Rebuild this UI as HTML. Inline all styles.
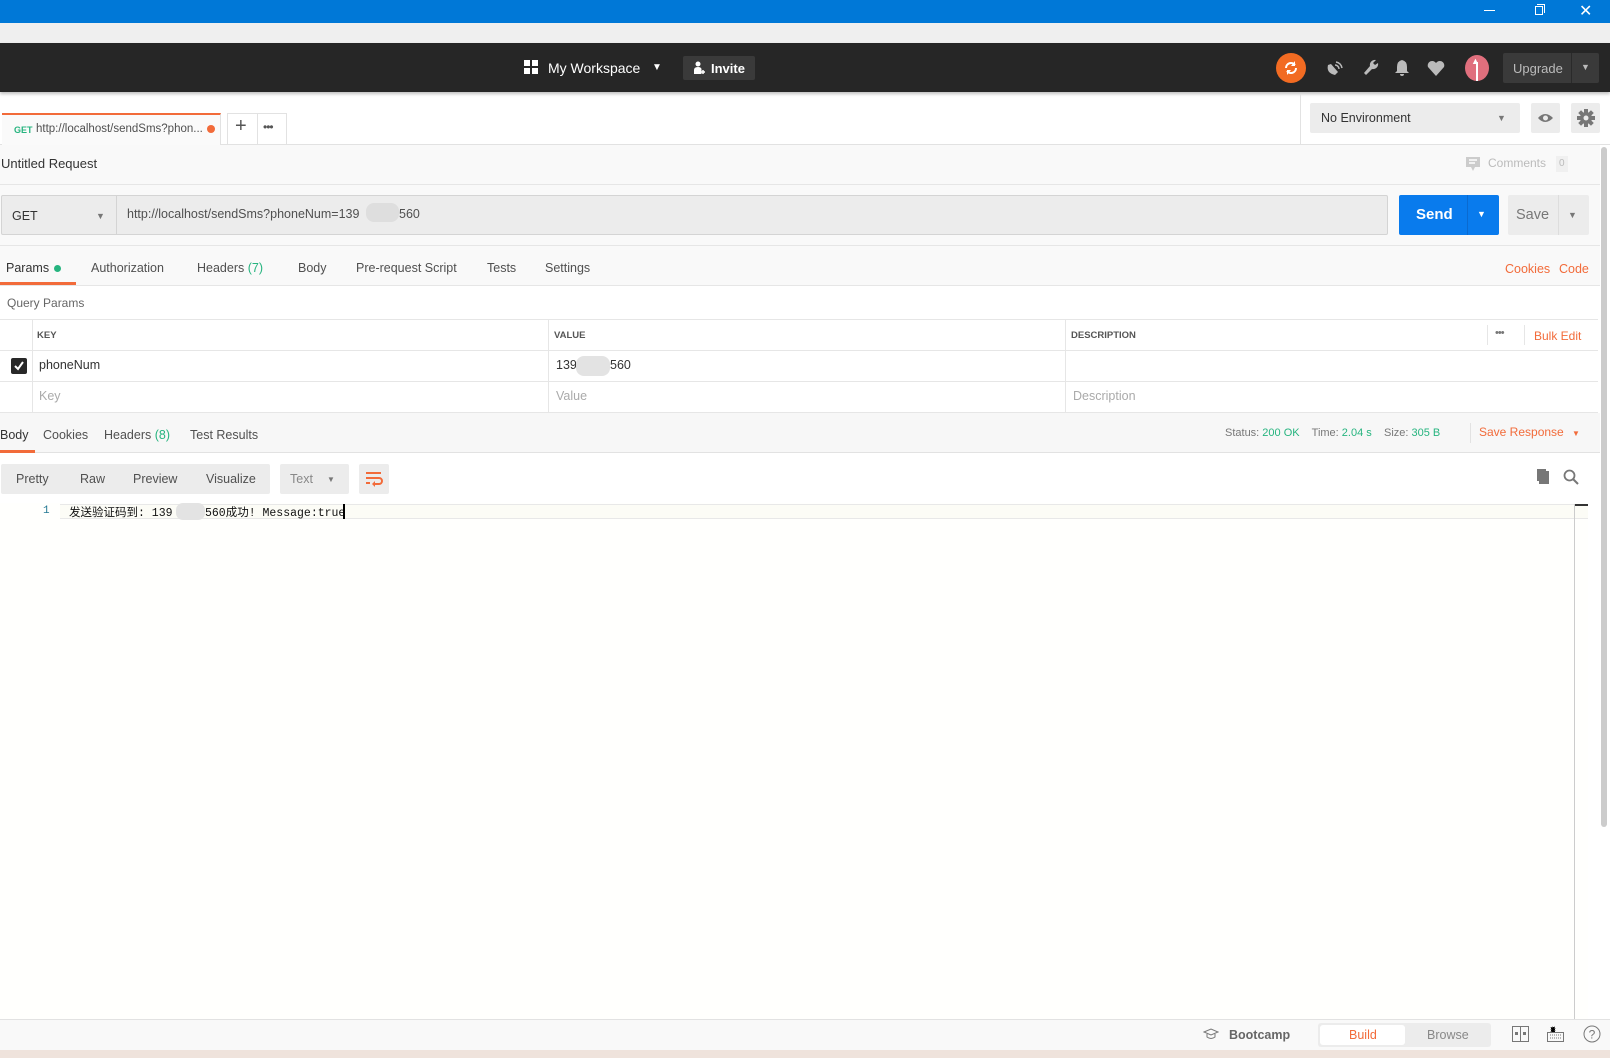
<!DOCTYPE html>
<html><head><meta charset="utf-8"><style>
*{box-sizing:border-box;margin:0;padding:0}
body{width:1610px;height:1058px;overflow:hidden;position:relative;background:#fff;font-family:"Liberation Sans","Noto Sans CJK SC",sans-serif;font-size:12px;color:#505050}
.a{position:absolute}
.t{position:absolute;white-space:nowrap}
</style></head><body>
<div class="a" style="left:0;top:0;width:1610px;height:23px;background:#0078d7"></div>
<div class="a" style="left:1484px;top:10px;width:11px;height:1px;background:#fff"></div>
<div class="a" style="left:1535px;top:6px;width:8px;height:9px;border:1px solid #fff"></div>
<div class="a" style="left:1537px;top:4px;width:8px;height:9px;border-top:1px solid #fff;border-right:1px solid #fff"></div>
<div class="t" style="left:1579px;top:1px;color:#fff;font-size:16px">✕</div>
<div class="a" style="left:0;top:23px;width:1610px;height:20px;background:#efefef"></div>
<div class="a" style="left:0;top:43px;width:1610px;height:49px;background:#262626;box-shadow:0 2px 3px rgba(0,0,0,.25)"></div>
<svg class="a" style="left:524px;top:60px" width="14" height="14"><rect x="0" y="0" width="6" height="6" fill="#fff"/><rect x="8" y="0" width="6" height="6" fill="#fff"/><rect x="0" y="8" width="6" height="6" fill="#fff"/><rect x="8" y="8" width="6" height="6" fill="#fff"/></svg>
<div class="t" style="left:548px;top:60px;color:#fff;font-size:14px">My Workspace</div>
<div class="t" style="left:652px;top:62px;color:#fff;font-size:10px">▼</div>
<div class="a" style="left:683px;top:56px;width:72px;height:24px;background:#3a3a3a;border-radius:2px"></div>
<svg class="a" style="left:693px;top:61px" width="12" height="14"><circle cx="5" cy="3" r="2.5" fill="#fff"/><path d="M1 13 V9 Q1 6 5 6 Q8 6 8.5 8 L8.5 13Z" fill="#fff"/><path d="M8 11h4M10 9v4" stroke="#fff" stroke-width="1.5"/></svg>
<div class="t" style="left:711px;top:61px;color:#fff;font-size:13px;font-weight:bold">Invite</div>
<div class="a" style="left:1276px;top:53px;width:30px;height:30px;border-radius:50%;background:#f26b22"></div>
<svg class="a" style="left:1283px;top:60px" width="16" height="16"><path d="M3 8a5 5 0 0 1 9-3M13 8a5 5 0 0 1-9 3" stroke="#fff" stroke-width="2" fill="none"/><path d="M12 1v5h-4z" fill="#fff"/><path d="M4 15v-5h4z" fill="#fff"/></svg>
<svg class="a" style="left:1326px;top:59px" width="18" height="18"><path d="M2 6 Q0 14 9 16 L12 13 L5 5Z" fill="#bbb"/><path d="M9 6 a4 4 0 0 1 4 4M10 3a7 7 0 0 1 6 6" stroke="#bbb" stroke-width="1.5" fill="none"/></svg>
<svg class="a" style="left:1362px;top:59px" width="18" height="18"><path d="M14 1 a5 5 0 0 0-6 6 L2 14 L4 16 L10 10 a5 5 0 0 0 6-6 L13 6 L11 4Z" fill="#bbb"/></svg>
<svg class="a" style="left:1394px;top:59px" width="16" height="18"><path d="M8 1 Q3 2 3 8 L3 12 L1 14 L15 14 L13 12 L13 8 Q13 2 8 1Z M6 15 h4 a2 2 0 0 1-4 0" fill="#bbb"/></svg>
<svg class="a" style="left:1427px;top:60px" width="18" height="16"><path d="M9 16 L1 7 A4.5 4.5 0 0 1 9 3 A4.5 4.5 0 0 1 17 7Z" fill="#bbb"/></svg>
<div class="a" style="left:1465px;top:55px;width:24px;height:26px;border-radius:50%;background:#e06f7d"></div>
<div class="a" style="left:1476px;top:62px;width:2px;height:19px;background:#fff"></div>
<div class="t" style="left:1471px;top:56px;color:#fff;font-size:9px">▲</div>
<div class="a" style="left:1503px;top:53px;width:96px;height:30px;background:#3a3a3a;border-radius:2px"></div>
<div class="a" style="left:1571px;top:53px;width:1px;height:30px;background:#2a2a2a"></div>
<div class="t" style="left:1513px;top:61px;color:#bbb;font-size:13px">Upgrade</div>
<div class="t" style="left:1581px;top:62px;color:#bbb;font-size:9px">▼</div>
<div class="a" style="left:0;top:144px;width:1610px;height:1px;background:#e2e2e2"></div>
<div class="a" style="left:1300px;top:94px;width:1px;height:50px;background:#e2e2e2"></div>
<div class="a" style="left:2px;top:113px;width:219px;height:32px;background:#fafafa;border-top:2px solid #f26b3a;border-right:1px solid #e2e2e2"></div>
<div class="t" style="left:14px;top:125px;color:#26b47f;font-size:9px;font-weight:bold">GET</div>
<div class="t" style="left:36px;top:123px;font-size:11.5px;color:#505050">http://localhost/sendSms?phon...</div>
<div class="a" style="left:207px;top:125px;width:8px;height:8px;border-radius:50%;background:#f26b3a"></div>
<div class="a" style="left:227px;top:113px;width:60px;height:31px;border:1px solid #e2e2e2;border-bottom:none"></div>
<div class="a" style="left:257px;top:113px;width:1px;height:31px;background:#e2e2e2"></div>
<div class="t" style="left:235px;top:115px;font-size:20px;color:#555">+</div>
<div class="t" style="left:263px;top:120px;font-size:12px;color:#555;letter-spacing:-1px">•••</div>
<div class="a" style="left:1310px;top:103px;width:210px;height:30px;background:#ececec;border-radius:2px"></div>
<div class="t" style="left:1321px;top:111px;font-size:12.5px;color:#333">No Environment</div>
<div class="t" style="left:1497px;top:113px;font-size:9px;color:#777">▼</div>
<div class="a" style="left:1531px;top:103px;width:29px;height:30px;background:#ececec;border-radius:2px"></div>
<svg class="a" style="left:1537px;top:112px" width="17" height="12"><path d="M1 6 Q8 -2 16 6 Q8 14 1 6Z" fill="#777"/><circle cx="8.5" cy="6" r="2.5" fill="#ececec"/></svg>
<div class="a" style="left:1571px;top:103px;width:29px;height:30px;background:#ececec;border-radius:2px"></div>
<svg class="a" style="left:1576px;top:108px" width="20" height="20"><g fill="#777" transform="translate(10 10)"><rect x="-2" y="-9" width="4" height="18"/><rect x="-2" y="-9" width="4" height="18" transform="rotate(45)"/><rect x="-2" y="-9" width="4" height="18" transform="rotate(90)"/><rect x="-2" y="-9" width="4" height="18" transform="rotate(135)"/><circle r="6"/></g><circle cx="10" cy="10" r="2.5" fill="#ececec"/></svg>
<div class="a" style="left:0;top:145px;width:1600px;height:268px;background:#f9f9f9"></div>
<div class="t" style="left:1px;top:156px;font-size:13px;color:#333">Untitled Request</div>
<svg class="a" style="left:1465px;top:156px" width="16" height="16"><path d="M1 1h14v10H10l-2 4-2-4H1Z" fill="#ccc"/><path d="M4 4h8M4 7h6" stroke="#fff" stroke-width="1.5"/></svg>
<div class="t" style="left:1488px;top:156px;font-size:12px;color:#bbb">Comments</div>
<div class="a" style="left:1556px;top:156px;width:12px;height:16px;background:#f0f0f0"></div>
<div class="t" style="left:1559px;top:158px;font-size:10px;color:#bbb">0</div>
<div class="a" style="left:0;top:184px;width:1600px;height:1px;background:#e6e6e6"></div>
<div class="a" style="left:1px;top:195px;width:1387px;height:40px;background:#ececec;border:1px solid #d4d4d4;border-radius:2px"></div>
<div class="a" style="left:116px;top:196px;width:1px;height:38px;background:#d4d4d4"></div>
<div class="t" style="left:12px;top:209px;font-size:12.5px;color:#333">GET</div>
<div class="t" style="left:96px;top:211px;font-size:9px;color:#777">▼</div>
<div class="t" style="left:127px;top:207px;font-size:12.5px;color:#505050">http://localhost/sendSms?phoneNum=139</div>
<div class="a" style="left:366px;top:203px;width:33px;height:19px;background:#dedede;border-radius:8px"></div>
<div class="t" style="left:399px;top:207px;font-size:12.5px;color:#505050">560</div>
<div class="a" style="left:1399px;top:195px;width:100px;height:40px;background:#097bed;border-radius:2px"></div>
<div class="a" style="left:1467px;top:195px;width:1px;height:40px;background:#0a6ad0"></div>
<div class="t" style="left:1416px;top:206px;font-size:15px;color:#fff;font-weight:bold">Send</div>
<div class="t" style="left:1477px;top:209px;font-size:9px;color:#fff">▼</div>
<div class="a" style="left:1508px;top:195px;width:81px;height:40px;background:#ececec;border-radius:2px"></div>
<div class="a" style="left:1558px;top:195px;width:1px;height:40px;background:#ddd"></div>
<div class="t" style="left:1516px;top:207px;font-size:14.5px;color:#777">Save</div>
<div class="t" style="left:1568px;top:210px;font-size:9px;color:#777">▼</div>
<div class="a" style="left:0;top:245px;width:1600px;height:1px;background:#e6e6e6"></div>
<div class="t" style="left:6px;top:261px;font-size:12.5px;color:#333">Params</div>
<div class="a" style="left:54px;top:265px;width:7px;height:7px;border-radius:50%;background:#26b47f"></div>
<div class="a" style="left:0;top:282px;width:76px;height:3px;background:#f26b3a"></div>
<div class="t" style="left:91px;top:261px;font-size:12.5px">Authorization</div>
<div class="t" style="left:197px;top:261px;font-size:12.5px">Headers <span style="color:#26b47f">(7)</span></div>
<div class="t" style="left:298px;top:261px;font-size:12.5px">Body</div>
<div class="t" style="left:356px;top:261px;font-size:12.5px">Pre-request Script</div>
<div class="t" style="left:487px;top:261px;font-size:12.5px">Tests</div>
<div class="t" style="left:545px;top:261px;font-size:12.5px">Settings</div>
<div class="t" style="left:1505px;top:262px;font-size:12.5px;color:#f26b3a">Cookies</div>
<div class="t" style="left:1559px;top:262px;font-size:12.5px;color:#f26b3a">Code</div>
<div class="a" style="left:0;top:285px;width:1600px;height:1px;background:#e6e6e6"></div>
<div class="a" style="left:0;top:286px;width:1600px;height:127px;background:#fff"></div>
<div class="t" style="left:7px;top:296px;font-size:12px;color:#666">Query Params</div>
<div class="a" style="left:0;top:319px;width:1598px;height:1px;background:#e6e6e6"></div>
<div class="a" style="left:0;top:350px;width:1598px;height:1px;background:#e6e6e6"></div>
<div class="a" style="left:0;top:381px;width:1598px;height:1px;background:#e6e6e6"></div>
<div class="a" style="left:0;top:412px;width:1598px;height:1px;background:#e6e6e6"></div>
<div class="a" style="left:32px;top:320px;width:1px;height:92px;background:#e6e6e6"></div>
<div class="a" style="left:548px;top:320px;width:1px;height:92px;background:#e6e6e6"></div>
<div class="a" style="left:1065px;top:320px;width:1px;height:92px;background:#e6e6e6"></div>
<div class="a" style="left:1487px;top:325px;width:1px;height:20px;background:#e6e6e6"></div>
<div class="a" style="left:1524px;top:325px;width:1px;height:20px;background:#e6e6e6"></div>
<div class="t" style="left:37px;top:330px;font-size:9.5px;font-weight:bold;color:#555">KEY</div>
<div class="t" style="left:554px;top:330px;font-size:9.5px;font-weight:bold;color:#555">VALUE</div>
<div class="t" style="left:1071px;top:330px;font-size:9.5px;font-weight:bold;color:#555">DESCRIPTION</div>
<div class="t" style="left:1495px;top:327px;font-size:11px;color:#777;letter-spacing:-1px">•••</div>
<div class="t" style="left:1534px;top:329px;font-size:12px;color:#f26b3a">Bulk Edit</div>
<div class="a" style="left:11px;top:358px;width:16px;height:16px;background:#282828;border-radius:2px"></div>
<svg class="a" style="left:13px;top:360px" width="12" height="12"><path d="M2 6l3 3 5-7" stroke="#fff" stroke-width="2" fill="none"/></svg>
<div class="t" style="left:39px;top:358px;font-size:12.5px;color:#333">phoneNum</div>
<div class="t" style="left:556px;top:358px;font-size:12.5px;color:#333">139</div>
<div class="a" style="left:576px;top:356px;width:34px;height:20px;background:#e3e3e3;border-radius:8px"></div>
<div class="t" style="left:610px;top:358px;font-size:12.5px;color:#333">560</div>
<div class="t" style="left:39px;top:389px;font-size:12.5px;color:#aaa">Key</div>
<div class="t" style="left:556px;top:389px;font-size:12.5px;color:#aaa">Value</div>
<div class="t" style="left:1073px;top:389px;font-size:12.5px;color:#aaa">Description</div>
<div class="a" style="left:0;top:413px;width:1600px;height:40px;background:#f7f7f7;border-bottom:1px solid #e2e2e2"></div>
<div class="t" style="left:0;top:428px;font-size:12.5px;color:#333">Body</div>
<div class="a" style="left:0;top:450px;width:35px;height:3px;background:#f26b3a"></div>
<div class="t" style="left:43px;top:428px;font-size:12.5px">Cookies</div>
<div class="t" style="left:104px;top:428px;font-size:12.5px">Headers <span style="color:#26b47f">(8)</span></div>
<div class="t" style="left:190px;top:428px;font-size:12.5px">Test Results</div>
<div class="t" style="left:1225px;top:427px;font-size:11px;color:#777">Status: <span style="color:#26b47f">200 OK</span>&nbsp;&nbsp;&nbsp; Time: <span style="color:#26b47f">2.04 s</span>&nbsp;&nbsp;&nbsp; Size: <span style="color:#26b47f">305 B</span></div>
<div class="a" style="left:1470px;top:423px;width:1px;height:20px;background:#e2e2e2"></div>
<div class="t" style="left:1479px;top:425px;font-size:12px;color:#f26b3a">Save Response</div>
<div class="t" style="left:1572px;top:429px;font-size:8px;color:#f26b3a">▼</div>
<div class="a" style="left:1px;top:464px;width:269px;height:30px;background:#ececec;border-radius:2px"></div>
<div class="t" style="left:16px;top:472px;font-size:12.5px">Pretty</div>
<div class="t" style="left:80px;top:472px;font-size:12.5px">Raw</div>
<div class="t" style="left:133px;top:472px;font-size:12.5px">Preview</div>
<div class="t" style="left:206px;top:472px;font-size:12.5px">Visualize</div>
<div class="a" style="left:280px;top:464px;width:69px;height:30px;background:#ececec;border-radius:2px"></div>
<div class="t" style="left:290px;top:472px;font-size:12.5px;color:#888">Text</div>
<div class="t" style="left:327px;top:475px;font-size:8px;color:#777">▼</div>
<div class="a" style="left:359px;top:464px;width:30px;height:30px;background:#ececec;border-radius:2px"></div>
<svg class="a" style="left:365px;top:470px" width="18" height="18"><path d="M1 3h15M1 8h13a3 3 0 0 1 0 6H9M1 13h4" stroke="#f26b3a" stroke-width="2" fill="none"/><path d="M10 11v6l-3-3z" fill="#f26b3a"/></svg>
<svg class="a" style="left:1537px;top:469px" width="14" height="16"><rect x="2" y="2" width="10" height="13" fill="#777"/><rect x="0" y="0" width="9" height="2" fill="#777"/><rect x="0" y="0" width="2" height="12" fill="#777"/></svg>
<svg class="a" style="left:1563px;top:469px" width="16" height="16"><circle cx="6.5" cy="6.5" r="5" stroke="#777" stroke-width="1.8" fill="none"/><path d="M10 10l5 5" stroke="#777" stroke-width="2"/></svg>
<div class="a" style="left:0;top:503px;width:1588px;height:516px;background:#fffffd"></div>
<div class="a" style="left:60px;top:504px;width:1528px;height:15px;border-top:1px solid #e8e8e8;border-bottom:1px solid #e8e8e8;background:#fcfcf6"></div>
<div class="t" style="left:43px;top:505px;font-family:'Liberation Mono',monospace;font-size:11px;color:#237893">1</div>
<div class="t" style="left:69px;top:504px;font-family:'Liberation Mono','Noto Sans CJK SC',monospace;font-size:11.5px;color:#111">发送验证码到: 139</div>
<div class="a" style="left:176px;top:503px;width:29px;height:17px;background:#e3e3e3;border-radius:7px"></div>
<div class="t" style="left:205px;top:504px;font-family:'Liberation Mono','Noto Sans CJK SC',monospace;font-size:11.5px;color:#111">560成功! Message:true</div>
<div class="a" style="left:343px;top:504px;width:1.5px;height:15px;background:#000"></div>
<div class="a" style="left:1574px;top:504px;width:14px;height:2px;background:#333"></div>
<div class="a" style="left:1574px;top:504px;width:1px;height:515px;background:#ccc"></div>
<div class="a" style="left:1601px;top:147px;width:6px;height:680px;background:#ccc;border-radius:3px"></div>
<div class="a" style="left:0;top:1019px;width:1610px;height:31px;background:#f9f9f9;border-top:1px solid #e2e2e2"></div>
<svg class="a" style="left:1203px;top:1028px" width="16" height="12"><path d="M1 4l7-3 7 3-7 3z" stroke="#777" fill="none"/><path d="M4 6v3q4 3 8 0V6" stroke="#777" fill="none"/></svg>
<div class="t" style="left:1229px;top:1028px;font-size:12.5px;color:#666;font-weight:bold">Bootcamp</div>
<div class="a" style="left:1318px;top:1023px;width:173px;height:24px;background:#ececec;border-radius:3px"></div>
<div class="a" style="left:1320px;top:1025px;width:85px;height:20px;background:#fff;border-radius:3px"></div>
<div class="t" style="left:1349px;top:1028px;font-size:12.5px;color:#f26b3a">Build</div>
<div class="t" style="left:1427px;top:1028px;font-size:12.5px;color:#888">Browse</div>
<svg class="a" style="left:1512px;top:1026px" width="17" height="17"><rect x=".5" y=".5" width="16" height="15" stroke="#777" fill="none"/><path d="M8.5 0v16" stroke="#777"/><rect x="3" y="6" width="3" height="3" fill="#777"/><rect x="11" y="6" width="3" height="3" fill="#777"/></svg>
<svg class="a" style="left:1547px;top:1026px" width="17" height="17"><rect x=".5" y="6.5" width="16" height="9" stroke="#777" fill="none"/><path d="M4 6V1h4v5M3 9h11M3 12h11" stroke="#777" stroke-dasharray="1 1"/></svg>
<svg class="a" style="left:1583px;top:1025px" width="18" height="18"><circle cx="9" cy="9" r="8" stroke="#777" fill="none"/><text x="9" y="13.5" font-size="12" text-anchor="middle" fill="#777" font-family="Liberation Sans">?</text></svg>
<div class="a" style="left:0;top:1050px;width:1610px;height:8px;background:#efe3dc"></div>
</body></html>
